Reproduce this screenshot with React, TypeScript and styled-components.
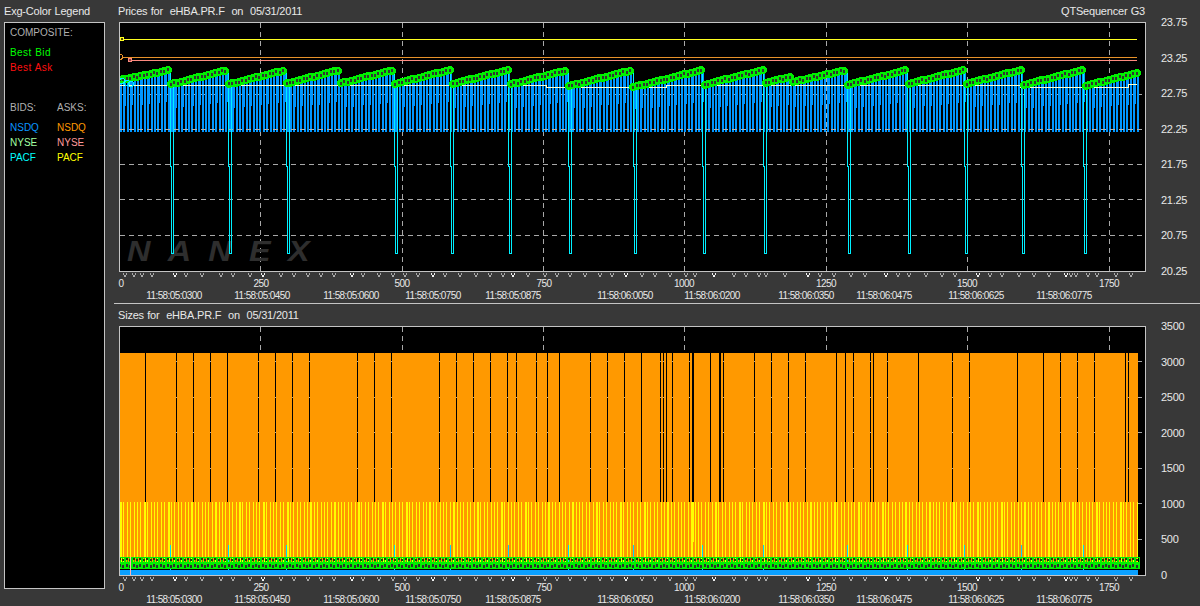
import React from "react";
import styled, { createGlobalStyle } from "styled-components";

const GlobalStyle = createGlobalStyle`
  html, body { margin: 0; padding: 0; background: #383838; }
`;

const Page = styled.div`
  width: 1200px;
  height: 606px;
  overflow: hidden;
  display: flex;
  background: #383838;
  color: #e8e8e8;
  font-family: "Liberation Sans", Arial, sans-serif;
  font-size: 11px;
  letter-spacing: -0.2px;
  word-spacing: 0.5px;
  white-space: pre;
`;
const Sidebar = styled.aside`
  width: 114px;
  flex: none;
  padding-left: 4px;
  box-sizing: border-box;
`;
const SideTitle = styled.div`
  height: 22px;
  line-height: 22px;
`;
const LegendBox = styled.div`
  width: 101px;
  height: 567px;
  box-sizing: border-box;
  border: 1px solid #c4c4c4;
  background: #000;
  padding: 2px 0 0 5px;
  display: flex;
  flex-direction: column;
  font-size: 10px;
  letter-spacing: 0;
`;
const LegendRow = styled.div<{ $gap?: number }>`
  display: grid;
  grid-template-columns: 47px 1fr;
  height: 15px;
  line-height: 15px;
  margin-top: ${(p) => p.$gap ?? 0}px;
`;
const LegendText = styled.span<{ $color: string; $spaced?: boolean }>`
  color: ${(p) => p.$color};
  letter-spacing: ${(p) => (p.$spaced ? "0.4px" : "0")};
`;
const Main = styled.main`
  flex: 1;
  display: flex;
  flex-direction: column;
`;
const Panel = styled.section<{ $divider?: boolean }>`
  display: flex;
  flex-direction: column;
  border-bottom: ${(p) => (p.$divider ? "1px solid #c4c4c4" : "none")};
`;
const TitleRow = styled.div`
  height: 22px;
  line-height: 22px;
  width: 1031px;
  padding-left: 4px;
  box-sizing: border-box;
  display: flex;
  justify-content: space-between;
`;
const PlotRow = styled.div`
  display: flex;
  align-items: flex-start;
  height: 250px;
`;
const PlotFrame = styled.div`
  margin-left: 5px;
  width: 1027px;
  height: 250px;
  box-sizing: border-box;
  border: 1px solid #c4c4c4;
  background: #000;
  flex: none;
`;
const PlotSvg = styled.svg`
  display: block;
  shape-rendering: crispEdges;
`;
const Watermark = styled.text`
  font-family: "Liberation Sans", Arial, sans-serif;
  font-style: italic;
  font-weight: 700;
  font-size: 30px;
  letter-spacing: 16px;
  fill: #2e2e2e;
`;
const YAxis = styled.div`
  margin: -6px 0 0 15px;
  height: 262px;
  display: flex;
  flex-direction: column;
  justify-content: space-between;
  line-height: 13px;
  letter-spacing: -0.3px;
`;
const XAxis = styled.div<{ $h: number }>`
  position: relative;
  height: ${(p) => p.$h}px;
  font-size: 10px;
  letter-spacing: -0.6px;
`;
const AxisLabel = styled.span<{ $top: number }>`
  position: absolute;
  top: ${(p) => p.$top}px;
  transform: translateX(-50%);
  line-height: 13px;
`;
const MarkerSvg = styled.svg`
  position: absolute;
  left: 0;
  top: 1px;
  shape-rendering: crispEdges;
`;

const BLUE = "#0096ff";
const CYAN = "#00f0ff";
const GREEN = "#00f000";
const rect = (x: number, y: number, w: number, h: number) => `M${x} ${y}h${w}v${h}h${-w}z`;

const starts = [120, 170, 228, 286, 340, 394, 450, 508, 568, 633, 702, 763, 793, 847, 907, 964, 1021, 1083];
const END = 1137;
const segments = starts.map((s, i) => {
  const e = starts[i + 1] ?? END;
  const endY = s === 763 ? 76 : s === 1083 ? 73 : 70;
  return { s, e, endY, startY: s === 793 ? 82 : s === 120 ? 80 : endY + 0.25 * (e - s) };
});
const spikes = starts.slice(1).filter((x) => x !== 340 && x !== 793);
const STEP = 3.4;
const topAt = (x: number) => {
  const seg = segments.find((g) => x >= g.s && x < g.e) ?? segments[segments.length - 1];
  return seg.startY + ((x - seg.s) / (seg.e - seg.s)) * (seg.endY - seg.startY);
};

const xs: number[] = [];
for (let v = 120; v < END; v += STEP) xs.push(v);

let upper = "";
let lower = "";
let dots = "";
xs.forEach((v, i) => {
  const x0 = Math.round(v);
  const x1 = Math.round(v + STEP);
  const t = Math.round(topAt(v));
  const b = Math.round(102 + (t - 70) * 0.43);
  upper += rect(x0, t, x1 - x0 - 1, b - t);
  lower += rect(x0, b, 2, 132 - b);
  dots += rect(x0 - 1, t - 2 + (i % 2), 2, 3);
});

const gridX = [260, 402, 543, 684, 826, 967, 1109];
const gridYTop = [94, 129, 164, 199, 235];
const gridYBottom = [361, 397, 432, 468, 503, 539];

const darkLines = [145, 176, 193, 210, 227, 258, 275, 292, 309, 357, 374, 391, 439, 456, 473, 490, 507, 516, 536, 547, 559, 590, 607, 624, 641, 660, 663, 666, 672, 689, 692, 693, 710, 719, 720, 723, 754, 771, 788, 805, 836, 845, 853, 870, 873, 887, 918, 952, 969, 1017, 1043, 1060, 1077, 1094, 1125, 1128];
let orange = "";
{
  let prev = 120;
  [...darkLines, 1138].forEach((d) => {
    if (d > prev) orange += rect(prev, 353, d - prev, 149);
    prev = d + 1;
  });
}
let stripes = "";
let rowOne = "";
let rowDots = "";
{
  xs.forEach((v, i) => {
    stripes += rect(Math.round(v), 502, i % 7 === 0 ? 2 : 1, 61);
    rowOne += rect(Math.round(v) - 1, 558 + (i % 2), 2, 2);
    rowDots += rect(Math.round(v) - 1, 564 + (i % 2), 2, 3);
  });
  stripes += rect(548, 502, 2, 40) + rect(692, 502, 2, 40);
}

const marks: [number, boolean][] = [
  [125, false], [134, false], [142, false], [152, false], [175, true], [186, false], [202, false], [221, false], [233, false], [250, false], [263, true], [281, false], [294, false], [308, false], [321, false], [334, false], [352, true], [363, false], [379, false], [393, false], [405, false], [418, false], [433, true], [445, false], [460, false], [476, false], [490, false], [503, false], [513, true], [528, false], [545, false], [557, false], [570, false], [585, false], [600, false], [612, false], [626, true], [642, false], [655, false], [670, false], [686, false], [695, false], [714, true], [734, false], [746, false], [759, false], [766, false], [785, false], [808, true], [820, false], [834, false], [851, false], [865, false], [886, true], [898, false], [909, false], [926, false], [942, false], [955, false], [978, true], [990, false], [1002, false], [1019, false], [1034, false], [1049, false], [1066, true], [1071, false], [1076, false], [1088, false], [1097, false], [1116, false], [1131, false],
];
const numberLabels: [string, number][] = [["0", 121], ["250", 261], ["500", 402], ["750", 544], ["1000", 684], ["1250", 826], ["1500", 967], ["1750", 1109]];
const timeLabels: [string, number][] = [
  ["11:58:05:0300", 174], ["11:58:05:0450", 262], ["11:58:05:0600", 351], ["11:58:05:0750", 433], ["11:58:05:0875", 513], ["11:58:06:0050", 625], ["11:58:06:0200", 712], ["11:58:06:0350", 806], ["11:58:06:0475", 884], ["11:58:06:0625", 976], ["11:58:06:0775", 1064],
];

const Grid: React.FC<{ ys: number[]; y0: number; y1: number }> = ({ ys, y0, y1 }) => (
  <g stroke="#a8a8a8" strokeWidth="1" strokeDasharray="5 4">
    {gridX.map((x) => <line key={x} x1={x + 0.5} x2={x + 0.5} y1={y0} y2={y1} />)}
    {ys.map((y) => <line key={y} x1={120} x2={1145} y1={y + 0.5} y2={y + 0.5} />)}
  </g>
);

const PricePlot = () => (
  <PlotSvg width="1025" height="248" viewBox="120 23 1025 248">
    <Grid ys={gridYTop} y0={23} y1={271} />
    <Watermark transform="translate(127 261) scale(1.08 1)">NANEX</Watermark>
    <path d={upper} fill={BLUE} />
    <path d={lower} fill={BLUE} />
    <line x1="120" x2="1145" y1="129.5" y2="129.5" stroke="#b0b0b0" strokeDasharray="5 4" />
    <rect x="120" y="39" width="1017" height="1" fill="#ffff20" />
    <rect x="120" y="57" width="1017" height="1" fill="#e8922a" />
    <rect x="129" y="60" width="1008" height="1" fill="#ff8a80" />
    <circle cx="122" cy="39" r="2" fill="#554400" stroke="#ffff20" />
    <circle cx="120" cy="57" r="2.5" fill="#000" stroke="#e8922a" />
    <circle cx="130" cy="60" r="2" fill="#884444" stroke="#ff8a80" />
    <path d="M120 85.5H546V87.5H666V85.5H1020V87.5H1128V84.5H1137" fill="none" stroke="#ffffc8" />
    {spikes.map((x) => (
      <path
        key={x}
        d={`M${x - 3} 71.5H${x + 0.5}V165L${x + 1.5} 168V253.5H${x + 3.5}V85`}
        fill="none"
        stroke={CYAN}
      />
    ))}
    {xs.map((v) => (
      <circle key={v} cx={Math.round(v)} cy={Math.round(topAt(v))} r="4" fill={GREEN} />
    ))}
    <path d={dots} fill="#303430" />
    {[[122, 81], [127, 83], [131, 84]].map(([x, y]) => (
      <circle key={x} cx={x} cy={y} r="2.5" fill="none" stroke={CYAN} />
    ))}
  </PlotSvg>
);

const SizePlot = () => (
  <PlotSvg width="1025" height="248" viewBox="120 327 1025 248">
    <Grid ys={gridYBottom} y0={327} y1={353} />
    <path d={orange} fill="#ff9900" />
    <rect x="120" y="502" width="1018" height="61" fill="#ff9900" />
    <path d={stripes} fill="#ffff00" />
    <rect x="120" y="563" width="1018" height="7" fill="#000" />
    <rect x="120" y="570" width="1018" height="5" fill="#0aa0ff" />
    {spikes.map((x) => <rect key={x} x={x} y="545" width="1" height="25" fill="#00d8ff" />)}
    {xs.map((v) => (
      <circle key={v} cx={Math.round(v)} cy="560" r="3" fill="none" stroke={GREEN} />
    ))}
    <path d={rowOne} fill="#2a3a10" />
    {xs.map((v) => (
      <circle key={v} cx={Math.round(v)} cy="566" r="3.5" fill={GREEN} />
    ))}
    <path d={rowDots} fill="#2c302c" />
    <rect x="130" y="557" width="1" height="18" fill="#ffb0b0" />
  </PlotSvg>
);

const AxisStrip: React.FC<{ height: number }> = ({ height }) => (
  <XAxis $h={height}>
    <MarkerSvg width="1086" height="8" viewBox="114 0 1086 8">
      {marks.map(([x, bright]) => (
        <polyline key={x} points={`${x - 2},0 ${x},4 ${x + 2},0`} fill="none" stroke={bright ? "#f0f0f0" : "#a8a8a8"} />
      ))}
    </MarkerSvg>
    {numberLabels.map(([t, x]) => <AxisLabel key={t} $top={5} style={{ left: x - 114 }}>{t}</AxisLabel>)}
    {timeLabels.map(([t, x]) => <AxisLabel key={t} $top={17} style={{ left: x - 114 }}>{t}</AxisLabel>)}
  </XAxis>
);

const priceTicks = ["23.75", "23.25", "22.75", "22.25", "21.75", "21.25", "20.75", "20.25"];
const sizeTicks = ["3500", "3000", "2500", "2000", "1500", "1000", "500", "0"];

export default function App() {
  return (
    <Page>
      <GlobalStyle />
      <Sidebar>
        <SideTitle>Exg-Color Legend</SideTitle>
        <LegendBox>
          <LegendRow><LegendText $color="#b0b0b0">COMPOSITE:</LegendText></LegendRow>
          <LegendRow $gap={5}><LegendText $color="#00ff00" $spaced>Best Bid</LegendText></LegendRow>
          <LegendRow><LegendText $color="#ff1010" $spaced>Best Ask</LegendText></LegendRow>
          <LegendRow $gap={25}>
            <LegendText $color="#b0b0b0">BIDS:</LegendText>
            <LegendText $color="#b0b0b0">ASKS:</LegendText>
          </LegendRow>
          <LegendRow $gap={5}>
            <LegendText $color="#0a96ff">NSDQ</LegendText>
            <LegendText $color="#ff9900">NSDQ</LegendText>
          </LegendRow>
          <LegendRow>
            <LegendText $color="#a0ffa0">NYSE</LegendText>
            <LegendText $color="#ff9a9a">NYSE</LegendText>
          </LegendRow>
          <LegendRow>
            <LegendText $color="#00ffff">PACF</LegendText>
            <LegendText $color="#ffff00">PACF</LegendText>
          </LegendRow>
        </LegendBox>
      </Sidebar>
      <Main>
        <Panel $divider>
          <TitleRow>
            <span>{"Prices for  eHBA.PR.F  on  05/31/2011"}</span>
            <span>QTSequencer G3</span>
          </TitleRow>
          <PlotRow>
            <PlotFrame><PricePlot /></PlotFrame>
            <YAxis>{priceTicks.map((t) => <span key={t}>{t}</span>)}</YAxis>
          </PlotRow>
          <AxisStrip height={31} />
        </Panel>
        <Panel>
          <TitleRow>
            <span>{"Sizes for  eHBA.PR.F  on  05/31/2011"}</span>
          </TitleRow>
          <PlotRow>
            <PlotFrame><SizePlot /></PlotFrame>
            <YAxis>{sizeTicks.map((t) => <span key={t}>{t}</span>)}</YAxis>
          </PlotRow>
          <AxisStrip height={30} />
        </Panel>
      </Main>
    </Page>
  );
}
